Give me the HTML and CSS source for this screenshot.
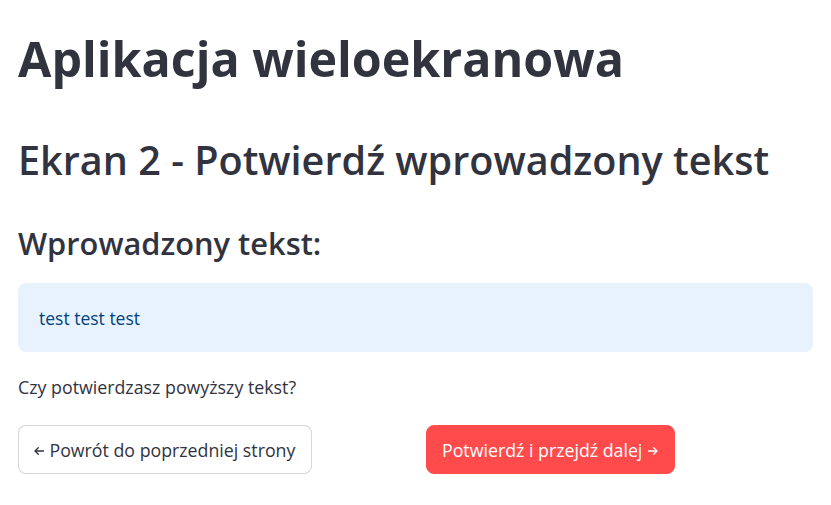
FILE: index.html
```html
<!DOCTYPE html>
<html lang="pl">
<head>
<meta charset="utf-8">
<title>Aplikacja wieloekranowa</title>
<link rel="stylesheet" href="styles.css">
</head>
<body>
<main class="page">
  <h1 class="title">Aplikacja wieloekranowa</h1>
  <h2 class="subtitle">Ekran 2 - Potwierdź wprowadzony tekst</h2>
  <h3 class="section">Wprowadzony tekst:</h3>
  <div class="alert">test test test</div>
  <p class="question">Czy potwierdzasz powyższy tekst?</p>
  <div class="actions">
    <div class="col">
      <button class="btn btn-secondary">
        <svg class="arrow" viewBox="0 0 10 8" aria-hidden="true"><path d="M9.5 4H1M4.3 0.7L1 4l3.3 3.3"/></svg>
        <span>Powrót do poprzedniej strony</span>
      </button>
    </div>
    <div class="col">
      <button class="btn btn-primary">
        <span>Potwierdź i przejdź dalej</span>
        <svg class="arrow" viewBox="0 0 10 8" aria-hidden="true"><path d="M0.5 4H9M5.7 0.7L9 4l-3.3 3.3"/></svg>
      </button>
    </div>
  </div>
</main>
</body>
</html>
```
FILE: styles.css
```css
html, body {
  margin: 0;
  padding: 0;
  background: #ffffff;
}
body {
  font-family: "Open Sans", "Noto Sans", sans-serif;
  color: #31333f;
}
.page {
  width: 795px;
  padding: 31px 0 0 18px;
  box-sizing: content-box;
}
.title {
  margin: 0;
  font-size: 48.4px;
  font-weight: 700;
  line-height: 54px;
}
.subtitle {
  margin: 52px 0 0;
  font-size: 39.6px;
  font-weight: 600;
  line-height: 46px;
}
.section {
  margin: 41px 0 0;
  font-size: 30.8px;
  font-weight: 600;
  line-height: 38px;
}
.alert {
  margin-top: 21px;
  height: 69px;
  box-sizing: border-box;
  padding: 0 21px;
  display: flex;
  align-items: center;
  background: #e8f2fc;
  color: #004280;
  border-radius: 8px;
  font-size: 17.5px;
}
.question {
  margin: 23px 0 0;
  font-size: 17.8px;
  line-height: 25px;
}
.actions {
  margin-top: 25px;
  display: grid;
  grid-template-columns: 1fr 1fr;
  column-gap: 21px;
}
.btn {
  height: 49px;
  padding: 0 16px 0 15px;
  border-radius: 8px;
  font-family: inherit;
  font-size: 17.75px;
  display: inline-flex;
  align-items: center;
  gap: 5.5px;
  cursor: pointer;
}
.arrow {
  width: 10px;
  height: 8px;
  fill: none;
  stroke: currentColor;
  stroke-width: 1.3;
  stroke-linecap: round;
  stroke-linejoin: round;
  margin-top: 2px;
}
.btn-secondary {
  background: #ffffff;
  color: #31333f;
  border: 1px solid rgba(49, 51, 63, 0.2);
}
.btn-primary {
  background: #ff4b4b;
  color: #ffffff;
  border: 1px solid #ff4b4b;
}
```
